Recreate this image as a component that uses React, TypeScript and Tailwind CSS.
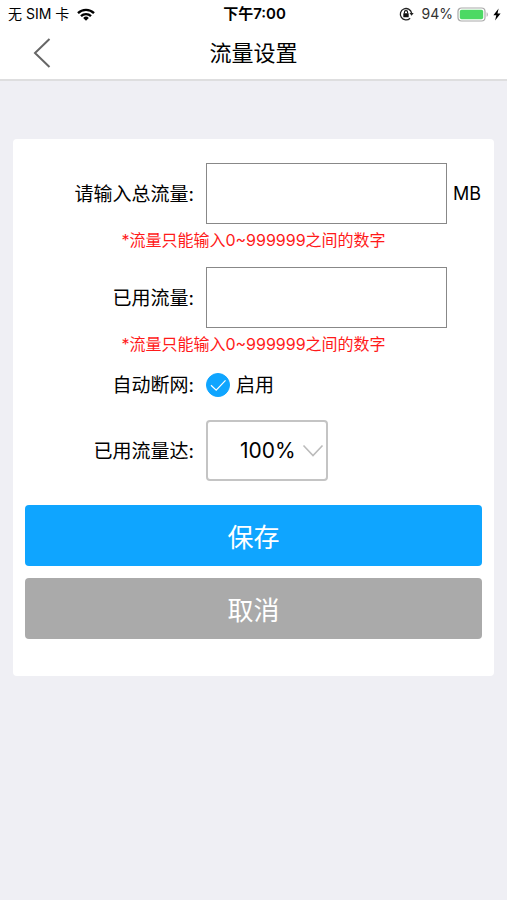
import React, { useState } from 'react';

const Row = ({ id, label, className, children, unit }: any) => (
    <div className={`grid grid-cols-[169px_1fr_29px] items-center ${className}`}>
        <label htmlFor={id} className="text-right text-[19px] leading-6 pt-0.5">{label}</label>
        <div className="flex items-center ml-3 mr-1.5">{children}</div>
        <span className="text-lg leading-6">{unit}</span>
    </div>
);

const Hint = () => (
    <p className="text-center text-base leading-[33px] text-[#ff1a1a]">*流量只能输入0~999999之间的数字</p>
);

const StatusBar = () => (
    <div className="grid grid-cols-3 items-center h-7 pl-2 pr-1.5 text-sm leading-5">
        <div className="flex items-center gap-2">
            <span>无 SIM 卡</span>
            <svg width="18" height="13" viewBox="0 0 18 13" fill="none" stroke="#000" strokeWidth="2.3">
                <path d="M1 5.1a11.3 11.3 0 0 1 16 0" />
                <path d="M4 8.1a7.1 7.1 0 0 1 10 0" />
                <path d="M9 12.7 6.2 9.9a4 4 0 0 1 5.6 0z" fill="#000" stroke="none" />
            </svg>
        </div>
        <span className="text-center text-[15px] font-semibold">下午7:00</span>
        <div className="flex items-center justify-end gap-1">
            <svg className="mr-1" width="15" height="14" viewBox="0 0 15 14">
                <path d="M11.1 11.2A5.7 5.7 0 1 1 12.6 6" fill="none" stroke="#222" strokeWidth="1.3" />
                <path d="M10.5 6h4.2l-2.1 2.8z" fill="#222" />
                <rect x="4.3" y="6.2" width="5.4" height="4" rx=".5" fill="#111" />
                <path d="M5.4 6.5V5.2a1.6 1.6 0 0 1 3.2 0v1.3" fill="none" stroke="#111" strokeWidth="1.1" />
            </svg>
            <span className="text-[#333]">94%</span>
            <svg width="32" height="15" viewBox="0 0 32 15">
                <rect x="1" y="1" width="27" height="13" rx="3.5" fill="#fff" stroke="#aaa" strokeWidth="1.2" />
                <rect x="2.8" y="2.8" width="23.4" height="9.4" rx="1.8" fill="#4cd964" />
                <path d="M29.6 5.2c1.6.6 1.6 4 0 4.6z" fill="#aaa" />
            </svg>
            <svg width="8" height="13" viewBox="0 0 8 13">
                <path d="M5.6.4.4 7.3h2.9L2.1 12.6 7.6 5.5H4.5z" fill="#000" />
            </svg>
        </div>
    </div>
);

export default function App() {
    const [total, setTotal] = useState('');
    const [used, setUsed] = useState('');
    const [enabled, setEnabled] = useState(true);
    const [limit, setLimit] = useState('100%');

    return (
        <div className="min-h-screen bg-[#efeff4] text-black font-[Inter,'Noto_Sans_CJK_SC',sans-serif]">
            <header className="bg-white border-b-2 border-[#dededf]">
                <StatusBar />
                {/* Title bar */}
                <div className="grid grid-cols-[80px_1fr_80px] items-center h-[51px] pb-0.5">
                    <button type="button" aria-label="返回" className="justify-self-start ml-8">
                        <svg width="20" height="30" viewBox="0 0 20 30" fill="none" stroke="#666" strokeWidth="2">
                            <path d="M17.5 1 3 15l14.5 14" />
                        </svg>
                    </button>
                    <h1 className="text-center text-[22px] leading-8">流量设置</h1>
                </div>
            </header>

            <form className="bg-white rounded mx-[13px] mt-[58px] px-3 pt-6 pb-[37px]" onSubmit={(e) => e.preventDefault()}>
                <Row id="total" label="请输入总流量:" unit="MB">
                    <input id="total" type="text" value={total} onChange={(e) => setTotal(e.target.value)}
                        className="w-full h-[61px] px-3 text-[22px] border border-[#888]" />
                </Row>
                <Hint />

                <Row id="used" label="已用流量:" className="mt-2.5">
                    <input id="used" type="text" value={used} onChange={(e) => setUsed(e.target.value)}
                        className="w-full h-[61px] px-3 text-[22px] border border-[#888]" />
                </Row>
                <Hint />

                <Row id="auto" label="自动断网:" className="h-[47px]">
                    <span className="relative flex">
                        <input id="auto" type="checkbox" checked={enabled} onChange={(e) => setEnabled(e.target.checked)}
                            className="appearance-none size-6 rounded-full border border-[#aaa] checked:border-[#0fa5ff] checked:bg-[#0fa5ff]" />
                        <svg className="absolute inset-0 pointer-events-none" width="24" height="24" viewBox="0 0 24 24" fill="none" stroke="#fff" strokeWidth="1.2">
                            <path d="m5 12.2 5.2 5L19.5 7.3" />
                        </svg>
                    </span>
                    <label htmlFor="auto" className="ml-1.5 text-[19px] leading-6 pt-0.5">启用</label>
                </Row>

                <Row id="limit" label="已用流量达:" className="mt-3">
                    <div className="relative">
                        <select id="limit" value={limit} onChange={(e) => setLimit(e.target.value)}
                            className="appearance-none block w-[122px] h-[61px] pl-8 text-[21px] bg-white border-2 border-[#c4c4c4] rounded">
                            <option>100%</option>
                            <option>90%</option>
                            <option>80%</option>
                        </select>
                        <svg className="absolute right-1 top-6 pointer-events-none" width="22" height="14" viewBox="0 0 22 14" fill="none" stroke="#bbb" strokeWidth="1.6">
                            <path d="m1.5 1.5 9.5 10 9.5-10" />
                        </svg>
                    </div>
                </Row>

                {/* Actions */}
                <div className="flex flex-col gap-3 mt-6 text-[26px] text-white">
                    <button type="submit" className="h-[61px] pt-1 rounded bg-[#0fa5ff]">保存</button>
                    <button type="button" className="h-[61px] pt-1 rounded bg-[#aaa]">取消</button>
                </div>
            </form>
        </div>
    );
}
